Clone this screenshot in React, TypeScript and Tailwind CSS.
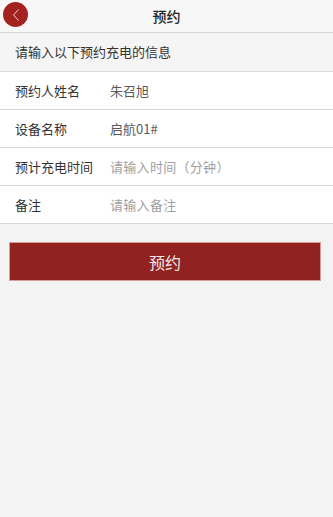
import type { ReactElement } from "react";

const font = {
  fontFamily: '"Noto Sans CJK SC", "Noto Sans", sans-serif',
};

type FieldRowProps = {
  readonly label: string;
  readonly value: string;
  readonly placeholder?: boolean;
};

function FieldRow({ label, value, placeholder }: FieldRowProps): ReactElement {
  return (
    <div className="flex h-[38px] items-center border-b border-[#d9d9d9] bg-white pl-[15px]">
      <span className="w-[95px] shrink-0 text-[13px] text-[#333333]">{label}</span>
      <span
        className={
          placeholder
            ? "text-[13px] tracking-[0.3px] text-[#a0a0a0]"
            : "text-[13px] text-[#5a5a5a]"
        }
      >
        {value}
      </span>
    </div>
  );
}

export default function App(): ReactElement {
  return (
    <div className="min-h-[517px] w-full bg-[#f3f3f3]" style={font}>
      <header className="relative flex h-[33px] items-center justify-center border-b border-[#d6d6d6] bg-[#f7f7f7]">
        <div className="absolute left-[3px] top-[2px] flex h-[25px] w-[25px] items-center justify-center rounded-full bg-[#a3211f]">
          <svg width="12" height="14" viewBox="0 0 12 14" fill="none">
            <path d="M8.5 1.5 L3.5 7 L8.5 12.5" stroke="#f2c9c6" strokeWidth="1" />
          </svg>
        </div>
        <h1 className="text-[14px] font-medium text-[#222222]">预约</h1>
      </header>
      <div className="flex h-[39px] items-center border-b border-[#dcdcdc] bg-[#f5f5f5] pl-[15px] text-[13px] text-[#333333]">
        请输入以下预约充电的信息
      </div>
      <FieldRow label="预约人姓名" value="朱召旭" />
      <FieldRow label="设备名称" value="启航01#" />
      <FieldRow label="预计充电时间" value="请输入时间（分钟）" placeholder />
      <FieldRow label="备注" value="请输入备注" placeholder />
      <div className="pl-[9px] pr-[12px] pt-[18px]">
        <button
          type="button"
          className="flex h-[39px] w-full items-center justify-center border border-[#d99a98] bg-[#922220] text-[16px] text-[#f4e9e8]"
        >
          预约
        </button>
      </div>
    </div>
  );
}
